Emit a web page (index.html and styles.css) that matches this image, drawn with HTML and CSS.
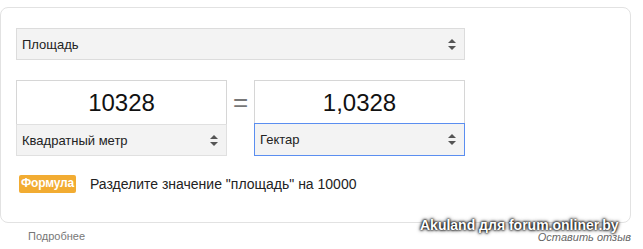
FILE: index.html
```html
<!DOCTYPE html>
<html>
<head>
  <meta charset="utf-8">
  <title>Конвертер величин</title>
  <link rel="stylesheet" href="styles.css">
</head>
<body>
  <div class="converter">
    <div class="select select-wide">
      <span>Площадь</span>
      <svg class="arrows" width="8" height="11" viewBox="0 0 8 11"><path d="M4 0 L8 4 L0 4 Z M0 7 L8 7 L4 11 Z" fill="#555"/></svg>
    </div>

    <div class="units">
      <div class="unit">
        <div class="value">10328</div>
        <div class="select">
          <span>Квадратный метр</span>
          <svg class="arrows" width="8" height="11" viewBox="0 0 8 11"><path d="M4 0 L8 4 L0 4 Z M0 7 L8 7 L4 11 Z" fill="#555"/></svg>
        </div>
      </div>
      <div class="equals">=</div>
      <div class="unit">
        <div class="value">1,0328</div>
        <div class="select focused">
          <span>Гектар</span>
          <svg class="arrows" width="8" height="11" viewBox="0 0 8 11"><path d="M4 0 L8 4 L0 4 Z M0 7 L8 7 L4 11 Z" fill="#555"/></svg>
        </div>
      </div>
    </div>

    <div class="formula">
      <span class="badge">Формула</span>
      <span class="formula-text">Разделите значение "площадь" на 10000</span>
    </div>
  </div>

  <div class="footer">
    <a href="#" class="more">Подробнее</a>
    <a href="#" class="feedback">Оставить отзыв</a>
  </div>

  <div class="watermark">Akuland для forum.onliner.by</div>
</body>
</html>
```

FILE: styles.css
```css
body {
  font-family: "Liberation Sans", Arial, sans-serif;
  margin: 0;
  padding: 0;
  background: #fff;
  color: #222;
  overflow: hidden;
}
.converter {
  box-sizing: border-box;
  width: 631px;
  height: 216px;
  margin-top: 7px;
  padding: 20px 15px 0 15px;
  border: 1px solid #e2e2e2;
  border-radius: 8px;
}
.select {
  box-sizing: border-box;
  display: flex;
  align-items: center;
  justify-content: space-between;
  height: 32px;
  padding: 0 8px 0 5px;
  background: #f3f3f3;
  border: 1px solid #dcdcdc;
  font-size: 13px;
  color: #222;
}
.select-wide {
  width: 449px;
}
.arrows {
  display: block;
}
.units {
  display: flex;
  align-items: flex-start;
  margin-top: 20px;
}
.unit {
  box-sizing: border-box;
  width: 211px;
}
.value {
  box-sizing: border-box;
  height: 44px;
  border: 1px solid #d6d6d6;
  border-bottom: none;
  text-align: center;
  font-size: 24px;
  line-height: 44px;
  color: #111;
}
.unit .select {
  height: 32px;
  border-color: #e0e0e0;
  border-top: 1px solid #e0e0e0;
}
.unit .select.focused {
  border: 1px solid #5b8ef0;
  height: 33px;
  margin-top: -1px;
}
.equals {
  width: 27px;
  text-align: center;
  font-size: 26px;
  line-height: 44px;
  color: #777;
}
.formula {
  display: flex;
  align-items: center;
  margin-top: 19px;
  padding-left: 3px;
}
.badge {
  background: #f2ac32;
  color: #fff;
  font-size: 12px;
  font-weight: bold;
  padding: 2px 2px 3px 2px;
  border-radius: 2px;
  line-height: 13px;
  letter-spacing: -0.2px;
}
.formula-text {
  margin-left: 14px;
  font-size: 14px;
  color: #222;
}
.footer {
  display: flex;
  justify-content: space-between;
  width: 631px;
  margin-top: 7px;
  font-size: 11px;
}
.more {
  margin-left: 28px;
  color: #777;
  text-decoration: none;
}
.feedback {
  margin-top: 1px;
  color: #666;
  font-style: italic;
  text-decoration: none;
}
.watermark {
  position: absolute;
  left: 420px;
  top: 217px;
  font-size: 14px;
  font-weight: bold;
  color: #fff;
  text-shadow: 0 0 2px #000, 0 0 3px #000, 0 0 4px #333;
}
```
